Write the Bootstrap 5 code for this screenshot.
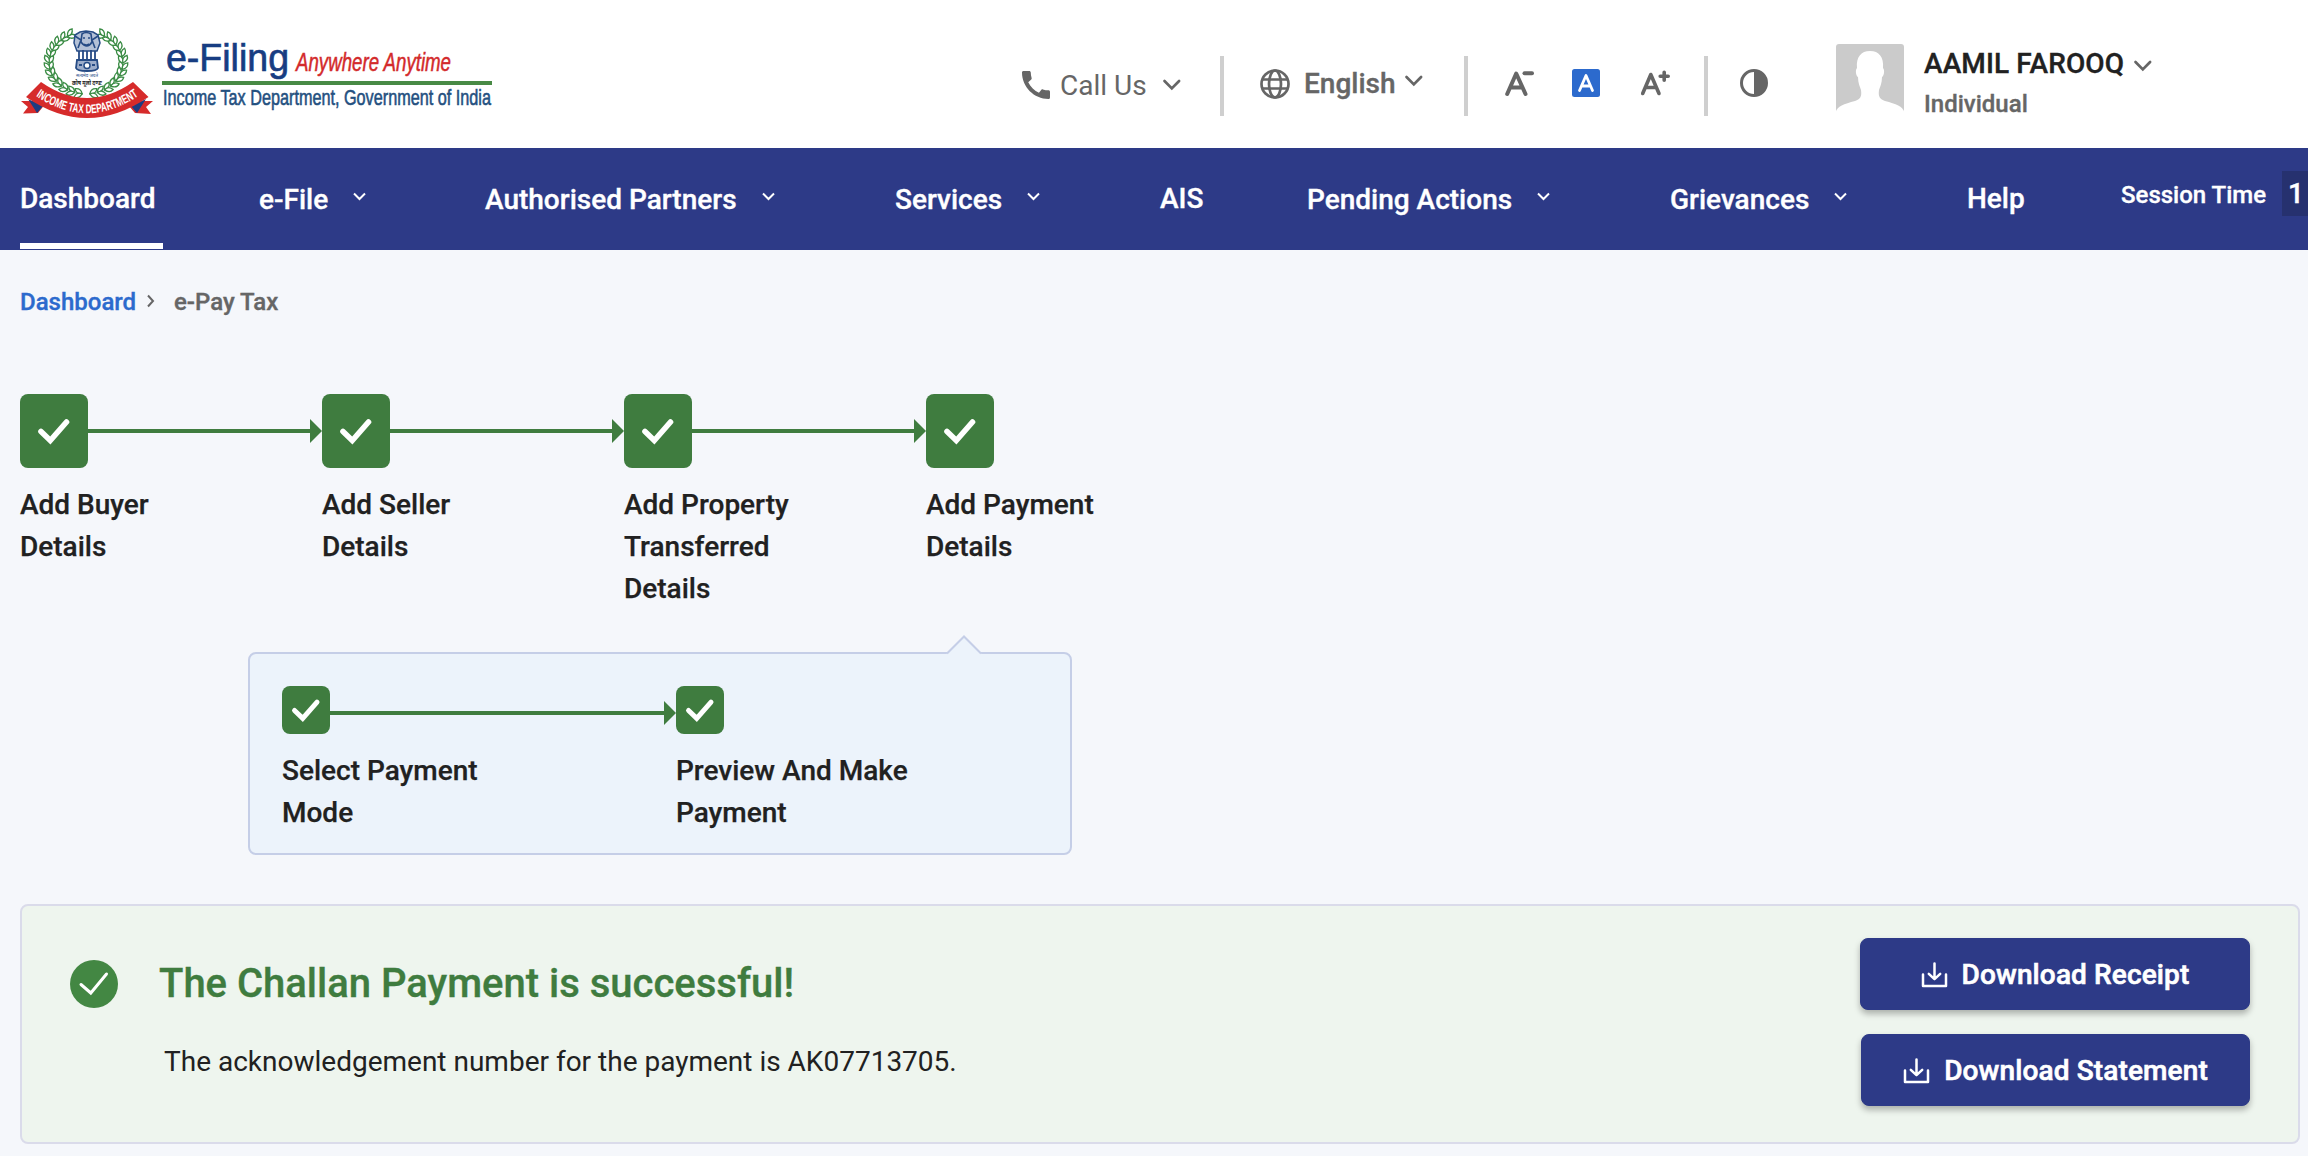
<!DOCTYPE html>
<html lang="en">
<head>
<meta charset="utf-8">
<meta name="viewport" content="width=device-width, initial-scale=1">
<title>e-Pay Tax</title>
<link href="https://cdn.jsdelivr.net/npm/bootstrap@5.3.0/dist/css/bootstrap.min.css" rel="stylesheet">
<style>
:root{--navy:#2d3a87;--ok:#3f7c3f;--grey:#666}
body{background:#f5f7fb;font-family:Roboto,"Liberation Sans",sans-serif;font-size:28px;line-height:42px;color:#212121;overflow:hidden}
svg{display:block;flex:none;overflow:visible}
.medium{font-weight:500;-webkit-text-stroke:.35px currentColor}
.topbar{height:148px;background:#fff;color:var(--grey)}
.brand{width:1022px;padding-left:18px}
.callus{width:198px;height:170px}
.callus span{margin-left:10px;width:103px;padding-top:2px}
.tools{height:172px}
.rule{width:4px;height:60px;background:#cfcfcf;flex:none}
.lang{width:240px;padding:0 0 4px 36px}
.lang span{margin-left:14px;width:101px}
.lang svg:last-child{margin-bottom:6px}
.sizes{width:236px;padding:0 0 6px 36px}
.contrast{margin:0 68px 6px 32px}
.avatar{margin-top:44px}
.user{margin:43px 0 0 20px}
.user .name{color:#212121}
.user .name span{width:210px;letter-spacing:.12px}
.user .name svg{margin-top:3px;color:#666}
.user .role{font-size:24px;line-height:38px}
.mainnav{height:102px;background:var(--navy)}
.mainnav .nav-link{height:102px;padding:0;color:#fff;line-height:101px;white-space:nowrap}
.mainnav .nav-link svg{margin-left:25px;margin-bottom:5px}
.mainnav .nav-link.active{width:143px;border-bottom:6px solid #fff;height:101px}
.mainnav .nav-link.plain{line-height:102px}
.session{font-size:24px;color:#fff;padding-bottom:12px}
.timer{width:26px;height:45px;background:#26316f;padding-left:6px;line-height:45px;font-size:28px;overflow:hidden}
.crumbs{padding:31px 20px 0;height:144px;font-size:24px;color:var(--grey)}
.crumbs a{color:#2c6acd;width:127px}
.crumbs svg{margin:13px 19px 0 0}
.stepper{padding-left:20px;height:242px}
.step{width:302px}
.tick{width:68px;height:74px;border-radius:8px;background:var(--ok)}
.tick-sm{width:48px;height:48px;border-radius:8px;background:var(--ok)}
.line{height:4px;background:var(--ok)}
.tip{width:0;height:0;border:12px solid transparent;border-left-color:var(--ok);border-right:0}
.step-label{margin-top:16px;-webkit-text-stroke:.25px currentColor}
.substeps{margin-left:248px;width:824px;height:203px;border:2px solid #c5cee7;border-radius:8px;background:#ecf3fb;padding:32px 0 0 32px;margin-top:16px}
.substeps .step{width:394px}
.substeps .line,.substeps .tip{margin-top:5px}
.notch{top:-19px;left:696px}
.result{margin:49px 8px 0 20px;height:240px;border:2px solid #dadbea;border-radius:8px;background:#eef5ee;padding:32px 48px 0 48px}
.result h1{font-size:40px;line-height:48px;color:var(--ok)}
.result p{margin:33px 0 0 5px}
.message{padding-top:22px}
.message>div{padding-left:41px}
.btn-dl{--bs-btn-bg:var(--navy);--bs-btn-color:#fff;--bs-btn-border-color:var(--navy);width:390px;height:72px;border-radius:8px;font-size:28px;letter-spacing:.13px;-webkit-text-stroke:.6px #fff;box-shadow:0 4px 6px rgba(0,0,0,.28);padding:2px 0 0}
.btn-dl svg{margin:0 14px 0 0}
.btn-dl.narrower{width:389px}
</style>
</head>
<body>
<svg width="0" height="0" class="position-absolute">
 <defs>
  <g id="chev"><path d="M1.500 2 8.800 9.400 16.100 2" fill="none" stroke="currentColor" stroke-width="2.700" stroke-linecap="round"/></g>
  <g id="navchev"><path d="M1 1.500 6.500 7 12 1.500" fill="none" stroke="#fff" stroke-width="2"/></g>
  <g id="check"><path d="M4 14.500 13.300 23.500 29.500 5" fill="none" stroke="#fff" stroke-width="5.600" stroke-linecap="round"/></g>
  <g id="down"><path d="M2 12.500V24h23V12.500M13.500 1.500V17M7.800 11.800 13.500 17.200 19.200 11.800" fill="none" stroke="#fff" stroke-width="2.500" stroke-linecap="round" stroke-linejoin="round"/></g>
  <path id="leaf" d="M0 0C-1-4 1-6.500 4.300-7.500C5.500-4 3.500-1.500 0 0Z" fill="#fff" stroke="#3b8c45" stroke-width="1.300"/>
 </defs>
</svg>

<header class="topbar d-flex align-items-start">
 <div class="brand flex-shrink-0">
  <svg width="480" height="130" viewBox="18 0 480 130" role="img" aria-label="Income Tax Department">
   <g id="wreath"></g>
   <g fill="none" stroke="#264b85">
    <path d="M75 35l5-3 6-1 7 1 5 3 2 8-3 8H77l-3-8z" fill="#b4c1d7" stroke-width="1.500"/>
    <path d="M82 34q4-3 9 0l1 8q-5 8-11 0zM75 36l6 4-3 8M98 36l-6 4 3 8M83 38h2M88 38h2M84 44q2 2 5 0" stroke-width="1.600"/>
    <path d="M79 51v8M83 50v10M87 51v9M91 50v10M95 51v8" stroke-width="1.800"/>
    <path d="M77 60h20l1 8q-1 3-11 3t-11-3z" fill="#9dadca" stroke-width="1.800"/>
    <path d="M79 65h3M92 65h3" stroke-width="2"/><circle cx="87" cy="65.500" r="3" fill="#fff" stroke-width="1.500"/>
   </g>
   <text x="76" y="76.500" font-size="5" textLength="22" lengthAdjust="spacingAndGlyphs" fill="#264b85" font-family="Noto Sans,sans-serif">सत्यमेव जयते</text>
   <text x="72" y="85" font-size="7" font-weight="700" textLength="30" lengthAdjust="spacingAndGlyphs" fill="#222" font-family="Noto Sans,sans-serif">कोष मूलो दण्डः</text>
   <path d="M34 101 21 101 28 107 23 113.500 38 113 50 98ZM140 101 153 101 146 107 151 114 135 113 122 98Z" fill="#d62b2b"/>
   <path d="M28 99 43 106 37 113ZM146 99 131 106 137 113Z" fill="#1d3c80"/>
   <path d="M41 82Q87 114 133 82L148.500 97Q87 139 26 97Z" fill="#d62b2b"/>
   <path id="ribbon" d="M35 95.500Q87 131 139 95.500" fill="none"/>
   <text font-family="Liberation Sans,sans-serif" font-size="12.500" font-weight="700" fill="#fff"><textPath href="#ribbon" startOffset="1" textLength="110" lengthAdjust="spacingAndGlyphs">INCOME TAX DEPARTMENT</textPath></text>
   <g font-family="Liberation Sans,Arial,sans-serif">
    <text x="166" y="70.500" font-size="39" textLength="123" lengthAdjust="spacingAndGlyphs" fill="#173d82" stroke="#173d82" stroke-width=".7">e-Filing</text>
    <text x="296" y="71" font-size="25" font-style="italic" textLength="155" lengthAdjust="spacingAndGlyphs" fill="#d32a2b" stroke="#d32a2b" stroke-width=".5">Anywhere Anytime</text>
    <rect x="162" y="81" width="330" height="4" fill="#488a45"/>
    <text x="163" y="105" font-size="22.500" textLength="328" lengthAdjust="spacingAndGlyphs" fill="#24507f" stroke="#24507f" stroke-width=".6">Income Tax Department, Government of India</text>
   </g>
  </svg>
 </div>
 <div class="callus d-flex align-items-center">
  <svg width="28" height="28" viewBox="3 3 18 18" fill="#666"><path d="M20.010 15.380c-1.230 0-2.420-.2-3.530-.560-.35-.12-.74-.03-1.010.240l-1.570 1.970c-2.830-1.350-5.480-3.900-6.890-6.830l1.950-1.660c.270-.280.350-.670.240-1.020-.370-1.110-.560-2.300-.560-3.530 0-.540-.45-.99-.99-.99H4.190C3.650 3 3 3.240 3 3.990 3 13.280 10.730 21 20.010 21c.71 0 .99-.63.99-1.180v-3.450c0-.54-.45-.99-.99-.99z"/></svg>
  <span>Call Us</span>
  <svg width="18" height="12"><use href="#chev"/></svg>
 </div>
 <div class="tools d-flex align-items-center">
  <span class="rule"></span>
  <div class="lang d-flex align-items-center">
   <svg width="30" height="30" viewBox="0 0 30 30" fill="none" stroke="#666" stroke-width="2.700"><circle cx="15" cy="15" r="13.500"/><ellipse cx="15" cy="15" rx="6" ry="13.500"/><path d="M2.500 10.500h25M2.500 19.500h25"/></svg>
   <span class="medium">English</span>
   <svg width="18" height="12"><use href="#chev"/></svg>
  </div>
  <span class="rule"></span>
  <div class="sizes d-flex align-items-center">
   <svg width="32" height="28" viewBox="0 0 32 28" fill="none" stroke="#666" stroke-width="4" stroke-linecap="round" stroke-linejoin="round"><path d="M3.200 25 12.200 4.500 21.500 25M7 18.500H18"/><path d="M20.500 4.200h7.500"/></svg>
   <svg width="28" height="28" style="margin-left:36px"><rect width="28" height="28" rx="2.500" fill="#2c6acd"/><path d="M7.500 21.500 14 6.500 20.500 21.500M9.500 17H18.500" fill="none" stroke="#fff" stroke-width="2.800" stroke-linecap="round" stroke-linejoin="round"/></svg>
   <svg width="32" height="28" viewBox="0 0 32 28" style="margin-left:38px" fill="none" stroke="#666" stroke-width="3.600" stroke-linecap="round" stroke-linejoin="round"><path d="M4.700 24.500 12.800 5.500 21 24.500M7.500 18.500H18"/><path d="M22.200 7.200h8M26.200 3.200v8"/></svg>
  </div>
  <span class="rule"></span>
  <svg class="contrast" width="28" height="28" viewBox="0 0 28 28"><circle cx="14" cy="14" r="12.500" fill="none" stroke="#666" stroke-width="3"/><path d="M14 1a13 13 0 0 1 0 26z" fill="#666"/></svg>
 </div>
 <svg class="avatar" width="68" height="68" viewBox="0 0 68 68"><rect width="68" height="68" rx="3" fill="#cbcbcb"/><path d="M34 7C25 7 20 13 21 24c-2 2-1 8 1 9 0 6 2 10 3 13 1 7-1 9-6 11C8 60 1 62 0 68H68c-1-6-8-8-19-11-5-2-7-4-6-11 1-3 3-7 3-13 2-1 3-7 1-9C48 13 43 7 34 7z" fill="#fff"/></svg>
 <div class="user medium">
  <div class="name d-flex align-items-center"><span>AAMIL FAROOQ</span><svg width="18" height="12"><use href="#chev"/></svg></div>
  <div class="role">Individual</div>
 </div>
</header>

<nav class="mainnav medium d-flex">
 <div class="d-flex" style="padding-left:20px">
  <div style="width:239px"><a class="nav-link plain active">Dashboard</a></div>
  <div style="width:226px"><a class="nav-link d-flex align-items-center">e-File<svg width="13" height="9"><use href="#navchev"/></svg></a></div>
  <div style="width:410px"><a class="nav-link d-flex align-items-center">Authorised Partners<svg width="13" height="9"><use href="#navchev"/></svg></a></div>
  <div style="width:265px"><a class="nav-link d-flex align-items-center">Services<svg width="13" height="9"><use href="#navchev"/></svg></a></div>
  <div style="width:147px"><a class="nav-link plain">AIS</a></div>
  <div style="width:363px"><a class="nav-link d-flex align-items-center">Pending Actions<svg width="13" height="9"><use href="#navchev"/></svg></a></div>
  <div style="width:297px"><a class="nav-link d-flex align-items-center">Grievances<svg width="13" height="9"><use href="#navchev"/></svg></a></div>
  <div style="width:154px"><a class="nav-link plain">Help</a></div>
 </div>
 <div class="session d-flex align-items-center"><span style="width:161px" class="text-nowrap pt-1">Session Time</span><span class="timer">1</span></div>
</nav>

<div class="crumbs medium d-flex align-items-start">
 <a class="text-decoration-none">Dashboard</a>
 <svg width="8" height="14"><path d="M1 1.500 6 7 1 12.500" fill="none" stroke="#666" stroke-width="2"/></svg>
 <span>e-Pay Tax</span>
</div>

<main>
 <div class="stepper d-flex">
  <div class="step"><div class="d-flex align-items-center"><span class="tick d-flex align-items-center justify-content-center"><svg width="34" height="28"><use href="#check"/></svg></span><span class="line flex-grow-1"></span><span class="tip"></span></div><div class="step-label medium">Add Buyer<br>Details</div></div>
  <div class="step"><div class="d-flex align-items-center"><span class="tick d-flex align-items-center justify-content-center"><svg width="34" height="28"><use href="#check"/></svg></span><span class="line flex-grow-1"></span><span class="tip"></span></div><div class="step-label medium">Add Seller<br>Details</div></div>
  <div class="step"><div class="d-flex align-items-center"><span class="tick d-flex align-items-center justify-content-center"><svg width="34" height="28"><use href="#check"/></svg></span><span class="line flex-grow-1"></span><span class="tip"></span></div><div class="step-label medium">Add Property<br>Transferred<br>Details</div></div>
  <div class="step"><div class="d-flex align-items-center"><span class="tick d-flex align-items-center justify-content-center"><svg width="34" height="28"><use href="#check"/></svg></span></div><div class="step-label medium">Add Payment<br>Details</div></div>
 </div>

 <div class="substeps d-flex position-relative">
  <svg class="notch position-absolute" width="36" height="20"><path d="M1 18.500 18 1 35 18.500V20H1z" fill="#ecf3fb"/><path d="M1 18.500 18 1.500 35 18.500" fill="none" stroke="#c5cee7" stroke-width="2"/></svg>
  <div class="step"><div class="d-flex align-items-center"><span class="tick-sm d-flex align-items-center justify-content-center"><svg width="30" height="26" viewBox="0 0 34 28"><use href="#check"/></svg></span><span class="line flex-grow-1"></span><span class="tip"></span></div><div class="step-label medium">Select Payment<br>Mode</div></div>
  <div class="step"><div class="d-flex align-items-center"><span class="tick-sm d-flex align-items-center justify-content-center"><svg width="30" height="26" viewBox="0 0 34 28"><use href="#check"/></svg></span></div><div class="step-label medium">Preview And Make<br>Payment</div></div>
 </div>

 <section class="result d-flex justify-content-between">
  <div class="message d-flex">
   <svg width="48" height="48"><circle cx="24" cy="24" r="24" fill="#438743"/><path d="M11 24.500 20.800 33 36.500 14" fill="none" stroke="#fff" stroke-width="3" stroke-linecap="round"/></svg>
   <div><h1 class="mb-0 medium">The Challan Payment is successful!</h1><p>The acknowledgement number for the payment is AK07713705.</p></div>
  </div>
  <div class="d-flex flex-column align-items-end gap-4">
   <button class="btn btn-dl medium d-flex align-items-center justify-content-center"><svg width="27" height="26"><use href="#down"/></svg>Download Receipt</button>
   <button class="btn btn-dl narrower medium d-flex align-items-center justify-content-center"><svg width="27" height="26"><use href="#down"/></svg>Download Statement</button>
  </div>
 </section>
</main>
<script src="https://cdn.jsdelivr.net/npm/bootstrap@5.3.0/dist/js/bootstrap.bundle.min.js"></script>
<script>
// Two laurel branches around the emblem, mirrored about x = 86.
const wreath = document.getElementById('wreath');
let out = '';
for (const side of [-1, 1]) {
  for (let i = 0; i < 13; i++) {
    const deg = 6 + i * 12, t = deg * Math.PI / 180;
    const x = 86 + side * 37 * Math.sin(t), y = 63 + 31 * Math.cos(t);
    for (const lean of [-30, 28]) {
      out += `<use href="#leaf" transform="translate(${x} ${y}) scale(${side} 1) rotate(${60 - deg + lean})"/>`;
    }
  }
}
wreath.innerHTML = out;
</script>
</body>
</html>
